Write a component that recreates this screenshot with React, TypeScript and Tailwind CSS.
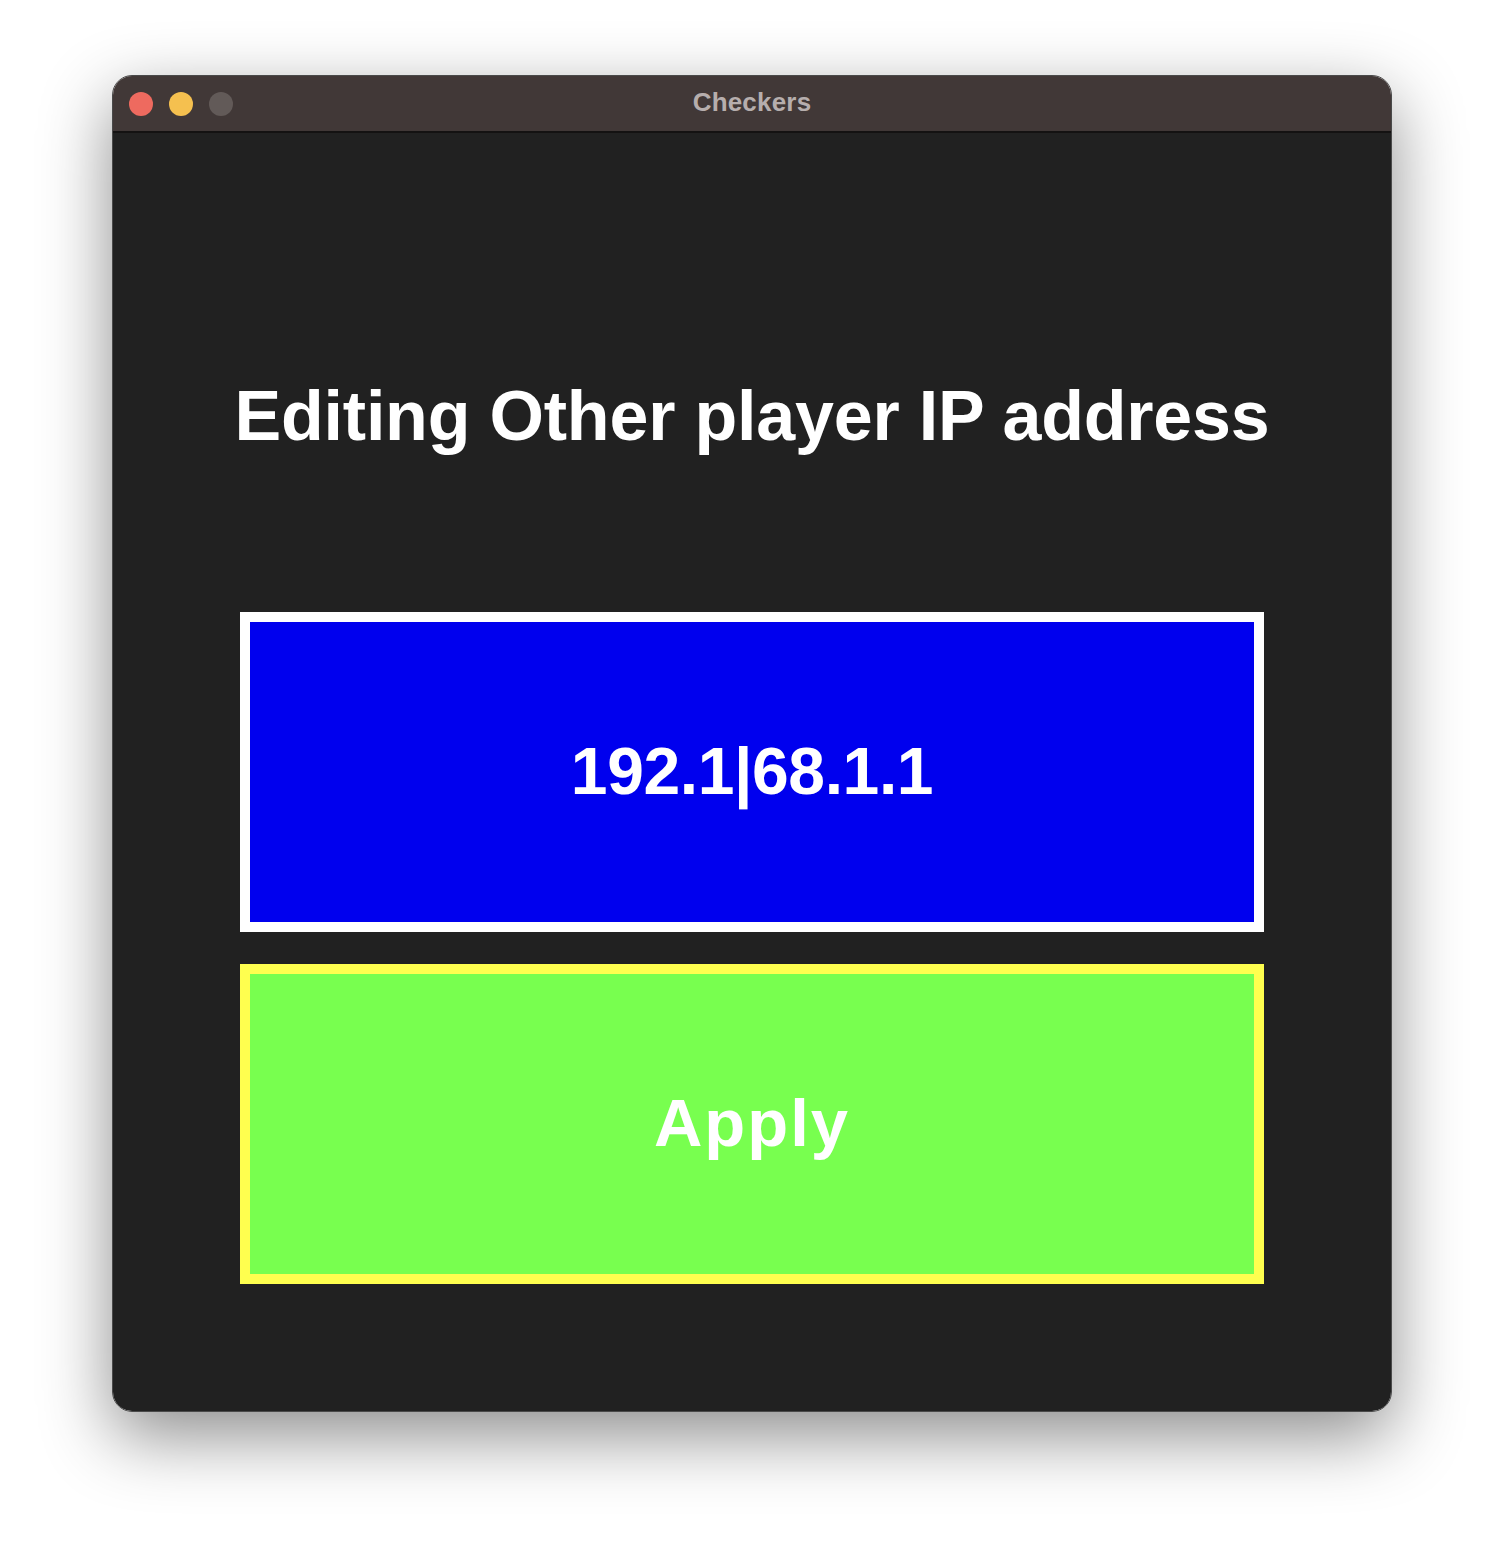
import React from "react";

const FONT = { fontFamily: '"Liberation Sans", Arial, sans-serif' };

function TrafficLights() {
  return (
    <div className="absolute left-[16px] top-[16px] flex items-center gap-[16px]">
      <span className="block w-[24px] h-[24px] rounded-full bg-[#ee6a5f]" />
      <span className="block w-[24px] h-[24px] rounded-full bg-[#f5c04f]" />
      <span className="block w-[24px] h-[24px] rounded-full bg-[#625a58]" />
    </div>
  );
}

export default function App() {
  return (
    <div className="w-[1504px] h-[1560px] bg-white pt-[75px] pl-[112px]" style={FONT}>
      <div className="w-[1280px] h-[1337px] rounded-[20px] overflow-hidden flex flex-col border border-[#4a4a4a] shadow-[0_24px_70px_rgba(0,0,0,0.45)]">
        {/* Title bar */}
        <div className="relative h-[57px] shrink-0 bg-[#413837] border-b-2 border-[#141212] flex items-center justify-center">
          <TrafficLights />
          <span className="text-[26px] font-bold text-[#b6aead] leading-none -mt-[3px] tracking-[0.2px]">Checkers</span>
        </div>

        {/* Content */}
        <div className="flex-1 bg-[#212121] flex flex-col items-center">
          <h1 className="mt-[248px] text-[70px] font-bold text-white leading-none tracking-[-0.2px]">
            Editing Other player IP address
          </h1>

          <div className="mt-[161px] w-[1024px] h-[320px] border-[10px] border-white bg-[#0000ee] flex items-center justify-center">
            <span className="text-[66px] font-bold text-white leading-none -mt-[2px] tracking-[-0.4px]">192.1|68.1.1</span>
          </div>

          <div className="mt-[32px] w-[1024px] h-[320px] border-[10px] border-[#ffff4f] bg-[#78ff4f] flex items-center justify-center">
            <span className="text-[67px] font-bold text-white leading-none tracking-[2px] -mt-[4px]">Apply</span>
          </div>
        </div>
      </div>
    </div>
  );
}
